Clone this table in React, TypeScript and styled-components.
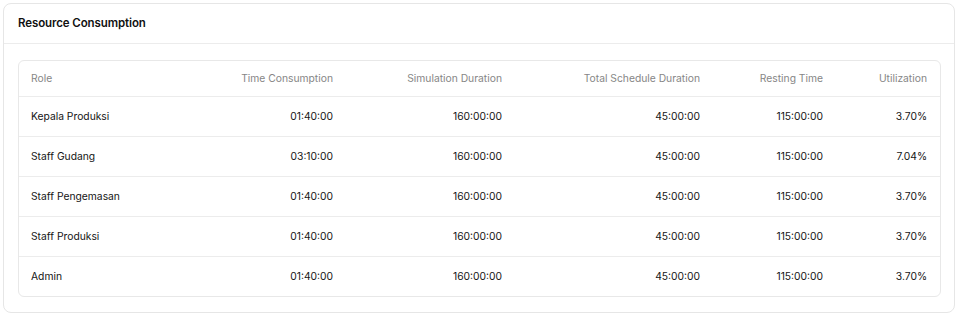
import React from "react";
import styled, { createGlobalStyle } from "styled-components";

const GlobalStyle = createGlobalStyle`
  html, body {
    margin: 0;
    padding: 0;
    background: #ffffff;
  }
  body {
    padding: 3px;
    font-family: 'Inter', 'Liberation Sans', sans-serif;
    color: #141414;
    -webkit-font-smoothing: antialiased;
  }
  * {
    box-sizing: border-box;
  }
`;

const Card = styled.section`
  width: 952px;
  height: 310px;
  border: 1px solid #e6e6e6;
  border-radius: 8px;
  background: #fff;
  display: flex;
  flex-direction: column;
`;

const CardHeader = styled.header`
  height: 41px;
  padding: 0 14px 1px;
  display: flex;
  align-items: center;
  border-bottom: 1px solid #ececec;
`;

const Title = styled.h2`
  margin: 0;
  font-size: 11.5px;
  font-weight: 600;
  color: #111;
  letter-spacing: -0.1px;
`;

const CardBody = styled.div`
  padding: 16px 13px 15px 14px;
`;

const Table = styled.div`
  border: 1px solid #e8e8e8;
  border-radius: 6px;
  overflow: hidden;
`;

const columns = "163px 163px 169px 198px 123px 104px";

const Row = styled.div<{ $head?: boolean }>`
  display: grid;
  grid-template-columns: ${columns};
  height: ${(p) => (p.$head ? "35px" : "40px")};
  align-items: center;
  border-top: ${(p) => (p.$head ? "none" : "1px solid #ececec")};
`;

const Cell = styled.div<{ $head?: boolean; $align?: "left" | "right" }>`
  padding: 0 12px 2px;
  text-align: ${(p) => p.$align ?? "right"};
  font-size: 10.3px;
  font-weight: 400;
  color: ${(p) => (p.$head ? "#868686" : "#151515")};
  white-space: nowrap;
`;

const headers = [
  "Role",
  "Time Consumption",
  "Simulation Duration",
  "Total Schedule Duration",
  "Resting Time",
  "Utilization",
];

const rows = [
  ["Kepala Produksi", "01:40:00", "160:00:00", "45:00:00", "115:00:00", "3.70%"],
  ["Staff Gudang", "03:10:00", "160:00:00", "45:00:00", "115:00:00", "7.04%"],
  ["Staff Pengemasan", "01:40:00", "160:00:00", "45:00:00", "115:00:00", "3.70%"],
  ["Staff Produksi", "01:40:00", "160:00:00", "45:00:00", "115:00:00", "3.70%"],
  ["Admin", "01:40:00", "160:00:00", "45:00:00", "115:00:00", "3.70%"],
];

export default function App() {
  return (
    <>
      <GlobalStyle />
      <Card>
        <CardHeader>
          <Title>Resource Consumption</Title>
        </CardHeader>
        <CardBody>
          <Table>
            <Row $head>
              {headers.map((h, i) => (
                <Cell key={h} $head $align={i === 0 ? "left" : "right"}>
                  {h}
                </Cell>
              ))}
            </Row>
            {rows.map((r) => (
              <Row key={r[0]}>
                {r.map((v, i) => (
                  <Cell key={i} $align={i === 0 ? "left" : "right"}>
                    {v}
                  </Cell>
                ))}
              </Row>
            ))}
          </Table>
        </CardBody>
      </Card>
    </>
  );
}
